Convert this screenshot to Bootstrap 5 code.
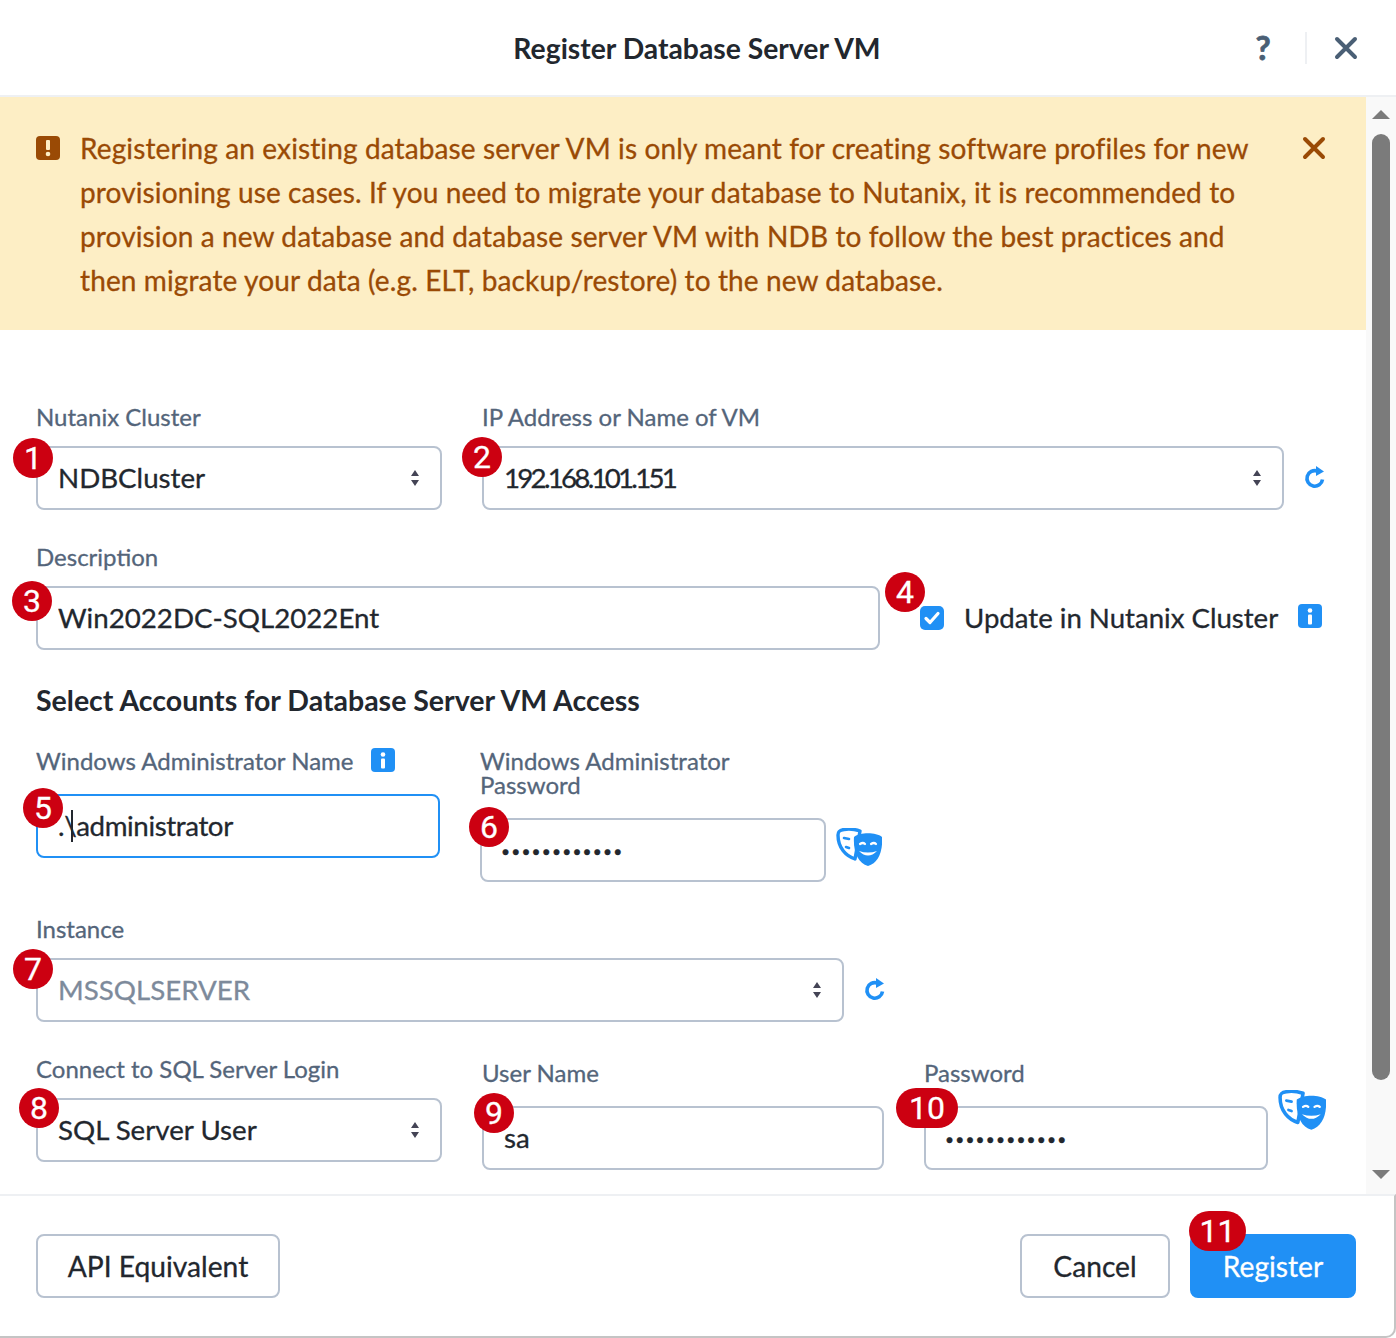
<!DOCTYPE html>
<html lang="en">
<head>
<meta charset="utf-8">
<title>Register Database Server VM</title>
<link href="https://cdn.jsdelivr.net/npm/bootstrap@5.3.0/dist/css/bootstrap.min.css" rel="stylesheet">
<style>
html,body{height:1338px;overflow:hidden;background:#fff}
body{font-family:"Lato","Noto Sans",sans-serif;color:#22272e;font-size:28px;-webkit-text-stroke:.3px currentColor}
.dlg{height:1338px;display:flex;flex-direction:column;background:#fff}
.dlg-head{height:97px;flex:none;display:grid;grid-template-columns:1fr auto 1fr;align-items:center;border-bottom:2px solid #eef0f3;padding:2px 0 0}
.dlg-title{font-size:28.3px;font-weight:700;margin:0 2px 0 0;color:#22272e;line-height:1;-webkit-text-stroke:0}
.head-tools{display:flex;align-items:center;justify-content:flex-end;padding:0 38px 2px 0}
.help-q{font-size:33px;font-weight:700;color:#4a5f75;line-height:1;width:24px;text-align:center;-webkit-text-stroke:.8px #4a5f75;margin-right:2px}
.head-sep{width:2px;height:32px;background:#eef0f3;margin:0 27px 0 28px}
.mid{flex:1 1 auto;min-height:0;display:flex}
.scroller{flex:1 1 auto;min-width:0;overflow:hidden}
.sbar{flex:none;width:30px;background:#f9f9f9;display:flex;flex-direction:column;align-items:center;padding-top:13px}
.sbar-thumb{width:18px;height:946px;background:#7b7b7b;border-radius:9px;margin:15px 0 90px}
.sbar-up{width:0;height:0;border:9px solid transparent;border-top:0;border-bottom:9px solid #7b7b7b}
.sbar-down{width:0;height:0;border:9px solid transparent;border-bottom:0;border-top:9px solid #7b7b7b}
.warn{display:flex;margin:0;border:0;border-radius:0;background:#fdeec5;color:#9a4a05;padding:29px 40px 28px 36px;font-size:28px;letter-spacing:.12px;line-height:44px}
.warn-text{flex:1 1 auto;margin-left:20px}
.warn-ico{flex:none;margin-top:10px}
.warn-x{flex:none;margin-top:10px;margin-left:32px}
.frm{padding:76px 40px 24px 36px}
.lbl{font-size:24px;line-height:24px;color:#54657a;margin:-1px 0 17px;display:block}
.lbl-far{margin-bottom:21px}
.frow{display:flex;align-items:flex-start;margin-top:36px}
.frow-first{margin-top:0}
.fld{position:relative}
.inp.form-control,.inp.form-select{height:64px;border:2px solid #b8c2d0;border-radius:8px;font-size:27.7px;color:#22272e;padding:0 20px;box-shadow:none;font-family:inherit;background-color:#fff}
.inp.form-control{padding-bottom:2px}
.inp.form-select{background-position:right 14px center;background-size:22px 22px;background-image:url("data:image/svg+xml,%3csvg xmlns='http://www.w3.org/2000/svg' viewBox='0 0 22 22'%3e%3cpath fill='%23445' d='M11 3l4 6H7zM11 19l-4-6h8z'/%3e%3c/svg%3e")}
.inp.is-focus{border-color:#2090f5;letter-spacing:-.4px}
.inp.is-off{color:#7d8a9b}
.inp.tight{letter-spacing:-2.75px}
.inp.form-control.pwd{font-family:"Liberation Sans",sans-serif;font-size:20px;letter-spacing:3.2px;font-weight:700;padding:4px 20px 0}
.w-406{width:406px;flex:none}.w-802{width:802px;flex:none}.w-844{width:844px;flex:none}.w-404{width:404px;flex:none}.w-346{width:346px;flex:none}.w-808{width:808px;flex:none}.w-402{width:402px;flex:none}.w-344{width:344px;flex:none}
.ml-40{margin-left:40px}
.refresh{margin:auto 0 20px 20px;flex:none}
.upd{display:flex;align-items:center;margin-left:40px;height:64px;flex:none}
.chk.form-check-input{width:24px;height:24px;margin:0;border-radius:5px;border:0;background-color:#2090f5;background-size:24px;background-image:url("data:image/svg+xml,%3csvg xmlns='http://www.w3.org/2000/svg' viewBox='0 0 24 24'%3e%3cpath fill='none' stroke='%23fff' stroke-width='3.2' stroke-linecap='round' stroke-linejoin='round' d='M6 12.5l4 4 8-9'/%3e%3c/svg%3e")}
.upd-lbl{font-size:27.6px;margin:0;color:#22272e;width:314px;white-space:nowrap}
.i-ico{flex:none}
.upd-ico{margin:-4px 0 0 20px}
.sec{font-size:28.5px;line-height:36px;font-weight:700;margin:32px 0 32px;color:#22272e;-webkit-text-stroke:0}
.name-ico{margin-left:17px;vertical-align:top;margin-top:-1px}
.mask{flex:none;margin-left:10px}
.mask-a{margin-top:78px}
.mask-b{margin-top:32px}
.pin{position:absolute;min-width:40px;height:40px;border-radius:20px;background:#cc0011;color:#fff;font-family:"Roboto",sans-serif;font-size:32px;line-height:40px;text-align:center;font-weight:400;padding:0;z-index:3;-webkit-text-stroke:.3px #fff}
.p1{left:-23px;top:-8px}.p2{left:-20px;top:-9px}.p3{left:-24px;top:-5px}.p4{left:-35px;top:-34px}
.p5{left:-13px;top:-6px}.p6{left:-11px;top:-11px}.p7{left:-23px;top:-9px}.p8{left:-17px;top:-10px}
.p9{left:-8px;top:-13px}.p10{left:-28px;top:-18px;width:62px}.p11{left:-1px;top:-23px;width:57px}
.caret-bar{position:absolute;left:35px;top:16px;width:2px;height:32px;background:#22272e}
.chk-wrap{position:relative;width:24px;height:24px;margin-right:20px;flex:none}
.chk-wrap .chk{display:block}
.dlg-foot{flex:none;height:144px;border-top:2px solid #eef0f3;border-right:2px solid #c4c4c4;border-bottom:2px solid #c4c4c4;border-bottom-right-radius:10px;display:flex;align-items:flex-start;padding:38px 38px 0 36px}
.fbtn.btn{height:64px;font-size:28.2px;border:2px solid #b8c2d0;border-radius:8px;color:#22272e;background:#fff;padding:0}
.fbtn-api.btn{width:244px}
.fbtn-cancel.btn{width:150px;margin-left:auto}
.fbtn-go{position:relative;margin-left:20px}
.fbtn-main.btn{width:166px;background:#2090f5;border-color:#2090f5;color:#fff;display:block}
</style>
</head>
<body>
<div class="dlg">
  <header class="dlg-head">
    <div></div>
    <h1 class="dlg-title">Register Database Server VM</h1>
    <div class="head-tools">
      <span class="help-q">?</span><span class="head-sep"></span>
      <svg width="24" height="24" viewBox="0 0 24 24"><path d="M3 3l18 18M21 3L3 21" stroke="#4a5f75" stroke-width="4" stroke-linecap="round"/></svg>
    </div>
  </header>
  <div class="mid">
    <div class="scroller">
      <div class="warn alert alert-warning" role="alert">
        <svg class="warn-ico" width="24" height="24" viewBox="0 0 24 24"><rect width="24" height="24" rx="4" fill="#9a4a05"/><rect x="10" y="4" width="4" height="10" rx="1" fill="#fdeec5"/><circle cx="12" cy="18" r="2.3" fill="#fdeec5"/></svg>
        <div class="warn-text">Registering an existing database server VM is only meant for creating software profiles for new provisioning use cases. If you need to migrate your database to Nutanix, it is recommended to provision a new database and database server VM with NDB to follow the best practices and then migrate your data (e.g. ELT, backup/restore) to the new database.</div>
        <svg class="warn-x" width="24" height="24" viewBox="0 0 24 24"><path d="M3 3l18 18M21 3L3 21" stroke="#9a4a05" stroke-width="4" stroke-linecap="round"/></svg>
      </div>
      <form class="frm">
        <div class="frow frow-first">
          <div class="w-406">
            <label class="lbl">Nutanix Cluster</label>
            <div class="fld"><span class="pin p1">1</span><select class="inp form-select"><option>NDBCluster</option></select></div>
          </div>
          <div class="w-802 ml-40">
            <label class="lbl">IP Address or Name of VM</label>
            <div class="fld"><span class="pin p2">2</span><select class="inp form-select tight"><option>192.168.101.151</option></select></div>
          </div>
          <svg class="refresh" width="22" height="24" viewBox="0 0 22 24"><path d="M18.5 13.5a7.8 7.8 0 1 1-5-8.4" fill="none" stroke="#2090f5" stroke-width="3.6"/><path d="M12 0l8 5.5-8 4.5z" fill="#2090f5"/></svg>
        </div>
        <div class="frow">
          <div class="w-844">
            <label class="lbl">Description</label>
            <div class="fld"><span class="pin p3">3</span><input class="inp form-control" value="Win2022DC-SQL2022Ent"></div>
          </div>
          <div class="upd mt-auto">
            <div class="chk-wrap"><span class="pin p4">4</span><input class="chk form-check-input" type="checkbox" checked></div>
            <label class="upd-lbl">Update in Nutanix Cluster</label>
            <svg class="i-ico upd-ico" width="24" height="24" viewBox="0 0 24 24"><rect width="24" height="24" rx="4" fill="#2090f5"/><circle cx="12" cy="6.5" r="2.3" fill="#fff"/><rect x="10" y="10.5" width="4" height="10" rx="1" fill="#fff"/></svg>
          </div>
        </div>
        <h2 class="sec">Select Accounts for Database Server VM Access</h2>
        <div class="frow frow-first">
          <div class="w-404">
            <label class="lbl lbl-far">Windows Administrator Name<svg class="name-ico" width="24" height="24" viewBox="0 0 24 24"><rect width="24" height="24" rx="4" fill="#2090f5"/><circle cx="12" cy="6.5" r="2.3" fill="#fff"/><rect x="10" y="10.5" width="4" height="10" rx="1" fill="#fff"/></svg></label>
            <div class="fld"><span class="pin p5">5</span><input class="inp form-control is-focus" value=".\administrator"><span class="caret-bar"></span></div>
          </div>
          <div class="w-346 ml-40">
            <label class="lbl lbl-far">Windows Administrator Password</label>
            <div class="fld"><span class="pin p6">6</span><input class="inp form-control pwd" type="password" value="123456789012"></div>
          </div>
          <svg class="mask mask-a" width="46" height="38" viewBox="0 0 46 38"><path d="M2 7C2 3 4 2 8 1.5 13 .5 18 1 24 3L19 31C10 28 2 20 2 7Z" fill="#fff" stroke="#2090f5" stroke-width="3.4" stroke-linejoin="round"/><path d="M8 10l5 1M10 19l3 1" stroke="#2090f5" stroke-width="2.6" stroke-linecap="round"/><path d="M18 9C24 4 40 4 46 9 47 24 42 35 32 38 22 35 17 24 18 9Z" fill="#2090f5"/><path d="M24 16q3-2 5 0M35 16q3-2 5 0" stroke="#fff" stroke-width="2.2" fill="none" stroke-linecap="round"/><path d="M23 23q9 9 18 0q-9 3-18 0z" fill="#fff"/></svg>
        </div>
        <div class="frow">
          <div class="w-808">
            <label class="lbl">Instance</label>
            <div class="fld"><span class="pin p7">7</span><select class="inp form-select is-off"><option>MSSQLSERVER</option></select></div>
          </div>
          <svg class="refresh" width="22" height="24" viewBox="0 0 22 24"><path d="M18.5 13.5a7.8 7.8 0 1 1-5-8.4" fill="none" stroke="#2090f5" stroke-width="3.6"/><path d="M12 0l8 5.5-8 4.5z" fill="#2090f5"/></svg>
        </div>
        <div class="frow">
          <div class="w-406">
            <label class="lbl">Connect to SQL Server Login</label>
            <div class="fld"><span class="pin p8">8</span><select class="inp form-select"><option>SQL Server User</option></select></div>
          </div>
          <div class="w-402 ml-40 mt-1">
            <label class="lbl lbl-far">User Name</label>
            <div class="fld"><span class="pin p9">9</span><input class="inp form-control" value="sa"></div>
          </div>
          <div class="w-344 ml-40 mt-1">
            <label class="lbl lbl-far">Password</label>
            <div class="fld"><span class="pin p10">10</span><input class="inp form-control pwd" type="password" value="123456789012"></div>
          </div>
          <svg class="mask mask-b" width="48" height="40" viewBox="0 0 46 38"><path d="M2 7C2 3 4 2 8 1.5 13 .5 18 1 24 3L19 31C10 28 2 20 2 7Z" fill="#fff" stroke="#2090f5" stroke-width="3.4" stroke-linejoin="round"/><path d="M8 10l5 1M10 19l3 1" stroke="#2090f5" stroke-width="2.6" stroke-linecap="round"/><path d="M18 9C24 4 40 4 46 9 47 24 42 35 32 38 22 35 17 24 18 9Z" fill="#2090f5"/><path d="M24 16q3-2 5 0M35 16q3-2 5 0" stroke="#fff" stroke-width="2.2" fill="none" stroke-linecap="round"/><path d="M23 23q9 9 18 0q-9 3-18 0z" fill="#fff"/></svg>
        </div>
      </form>
    </div>
    <div class="sbar"><span class="sbar-up"></span><span class="sbar-thumb"></span><span class="sbar-down"></span></div>
  </div>
  <footer class="dlg-foot">
    <button type="button" class="btn fbtn fbtn-api">API Equivalent</button>
    <button type="button" class="btn fbtn fbtn-cancel">Cancel</button>
    <div class="fbtn-go"><span class="pin p11">11</span><button type="button" class="btn fbtn fbtn-main">Register</button></div>
  </footer>
</div>
<script src="https://cdn.jsdelivr.net/npm/bootstrap@5.3.0/dist/js/bootstrap.bundle.min.js"></script>
</body>
</html>
